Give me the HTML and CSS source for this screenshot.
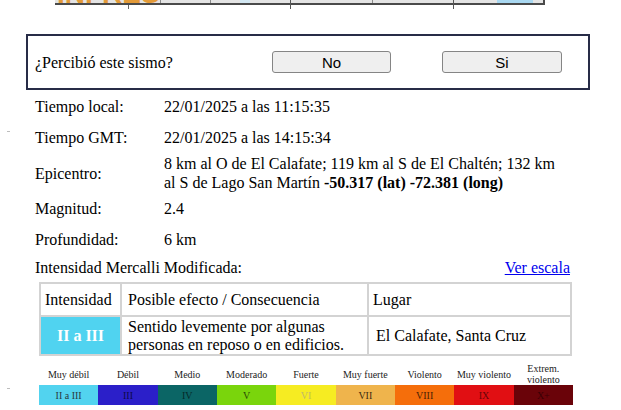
FILE: index.html
```html
<!DOCTYPE html>
<html lang="es">
<head>
<meta charset="utf-8">
<title>Sismo</title>
<link rel="stylesheet" href="styles.css">
</head>
<body>
<svg class="banner" width="621" height="10" viewBox="0 0 621 10" aria-hidden="true">
  <rect x="55" y="0" width="490" height="3" fill="#e4e4e4"/>
  <rect x="240" y="0" width="10" height="3" fill="#d2e7f2"/>
  <rect x="497" y="0" width="36" height="3" fill="#a9d8f1"/>
  <text x="57" y="3" class="banner-text">INFRES</text>
  <rect x="160" y="0" width="1" height="3" fill="#8a8a8a"/>
  <rect x="210" y="0" width="1" height="3" fill="#8a8a8a"/>
  <rect x="372" y="0" width="1" height="3" fill="#8a8a8a"/>
  <rect x="55" y="3" width="490" height="2" fill="#4a4a4a"/>
  <rect x="543" y="0" width="2" height="5" fill="#4a4a4a"/>
  <rect x="128" y="5" width="1" height="4" fill="#666"/>
  <rect x="290" y="0" width="1" height="9" fill="#555"/>
  <rect x="453" y="0" width="1" height="9" fill="#555"/>
</svg>

<span class="mark mark-a"></span>
<span class="mark mark-b"></span>

<form class="survey">
  <span class="q">¿Percibió este sismo?</span>
  <button type="button" class="btn">No</button>
  <button type="button" class="btn">Si</button>
</form>

<div class="details">
  <div class="row"><div class="lbl">Tiempo local:</div><div class="val">22/01/2025 a las 11:15:35</div></div>
  <div class="row"><div class="lbl">Tiempo GMT:</div><div class="val">22/01/2025 a las 14:15:34</div></div>
  <div class="row"><div class="lbl">Epicentro:</div><div class="val val-multi">8 km al O de El Calafate; 119 km al S de El Chaltén; 132 km al S de Lago San Martín <b>-50.317 (lat) -72.381 (long)</b></div></div>
  <div class="row"><div class="lbl">Magnitud:</div><div class="val">2.4</div></div>
  <div class="row"><div class="lbl">Profundidad:</div><div class="val">6 km</div></div>
</div>

<div class="mmi-head"><span>Intensidad Mercalli Modificada:</span><a href="#">Ver escala</a></div>

<div class="mmi">
  <div class="cell c1">Intensidad</div>
  <div class="cell c2">Posible efecto / Consecuencia</div>
  <div class="cell c3">Lugar</div>
  <div class="cell level">II a III</div>
  <div class="cell c2">Sentido levemente por algunas personas en reposo o en edificios.</div>
  <div class="cell c3 place">El Calafate, Santa Cruz</div>
</div>

<div class="scale">
  <div class="s-lbl">Muy débil</div>
  <div class="s-lbl">Débil</div>
  <div class="s-lbl">Medio</div>
  <div class="s-lbl">Moderado</div>
  <div class="s-lbl">Fuerte</div>
  <div class="s-lbl">Muy fuerte</div>
  <div class="s-lbl">Violento</div>
  <div class="s-lbl">Muy violento</div>
  <div class="s-lbl">Extrem.<br>violento</div>
  <div class="s-bar s2">II a III</div>
  <div class="s-bar s3">III</div>
  <div class="s-bar s4">IV</div>
  <div class="s-bar s5">V</div>
  <div class="s-bar s6">VI</div>
  <div class="s-bar s7">VII</div>
  <div class="s-bar s8">VIII</div>
  <div class="s-bar s9">IX</div>
  <div class="s-bar s10">X+</div>
</div>
</body>
</html>
```
FILE: styles.css
```css
* { box-sizing: border-box; }

body {
  margin: 0;
  font-family: "Liberation Serif", "Times New Roman", serif;
  font-size: 16px;
  color: #000;
  background: #fff;
}

.banner { display: block; }
.banner-text {
  font-family: "Liberation Sans", Arial, sans-serif;
  font-weight: bold;
  font-size: 28px;
  fill: #e39a38;
}

.mark {
  position: absolute;
  left: 7px;
  width: 3px;
  height: 1px;
  background: #bdbdbd;
}
.mark-a { top: 131px; }
.mark-b { top: 388px; }

.survey {
  margin: 24px 0 0 26px;
  width: 564px;
  height: 56px;
  border: 2px solid #282c47;
  padding-left: 7px;
  display: grid;
  grid-template-columns: 186px 119px 120px;
  column-gap: 51px;
  align-items: center;
}
.q { line-height: 19px; }
.btn {
  height: 22px;
  padding: 0;
  border: 1px solid #858585;
  border-radius: 3px;
  background: #efefef;
  font-family: "Liberation Sans", Arial, sans-serif;
  font-size: 15px;
  color: #000;
}

.details {
  margin: 1px 0 0 35px;
  width: 535px;
}
.row { display: flex; align-items: center; }
.lbl {
  flex: none;
  width: 129px;
  line-height: 19px;
  padding: 6px 0;
}
.val {
  flex: 1;
  line-height: 19px;
  padding: 6px 8px 6px 0;
}
.val-multi { padding: 1px 8px 1px 0; }

.mmi-head {
  margin: 3px 0 0 35px;
  width: 535px;
  display: flex;
  justify-content: space-between;
  line-height: 19px;
}
.mmi-head a { color: #0000ee; text-decoration: underline; }

.mmi {
  margin: 5px 0 0 39px;
  width: 533px;
  display: grid;
  grid-template-columns: 79px 245px 201px;
  grid-template-rows: 31px 37px;
  gap: 2px;
  padding: 2px;
  background: #d3d3d3;
}
.cell {
  background: #fff;
  line-height: 18px;
  display: flex;
  align-items: center;
}
.c1 { padding-left: 4px; }
.c2 { padding-left: 6px; }
.c3 { padding-left: 4px; }
.place { padding-left: 7px; }
.level {
  background: #50d3f0;
  color: #fff;
  font-weight: bold;
  justify-content: center;
}

.scale {
  margin: 7px 0 0 39px;
  width: 534px;
  display: grid;
  grid-template-columns: repeat(9, 1fr);
  grid-template-rows: 22px 20px;
  font-size: 10px;
}
.s-lbl {
  display: flex;
  align-items: center;
  justify-content: center;
  text-align: center;
  line-height: 11px;
  color: #222;
}
.s-bar {
  display: flex;
  align-items: center;
  justify-content: center;
  color: rgba(0, 0, 0, 0.62);
}
.s2 { background: #52d3ef; color: #2a3a40; }
.s3 { background: #2b1fc9; color: #0e0a4a; }
.s4 { background: #0b6565; color: #052a2a; }
.s5 { background: #7ad50c; color: #2a4a05; }
.s6 { background: #f6ec22; color: #c2b96a; }
.s7 { background: #efb44c; color: #3a2a10; }
.s8 { background: #f56e0b; color: #4a2205; }
.s9 { background: #e10f13; color: #6a0508; }
.s10 { background: #6a0309; color: #3a0004; }
```
